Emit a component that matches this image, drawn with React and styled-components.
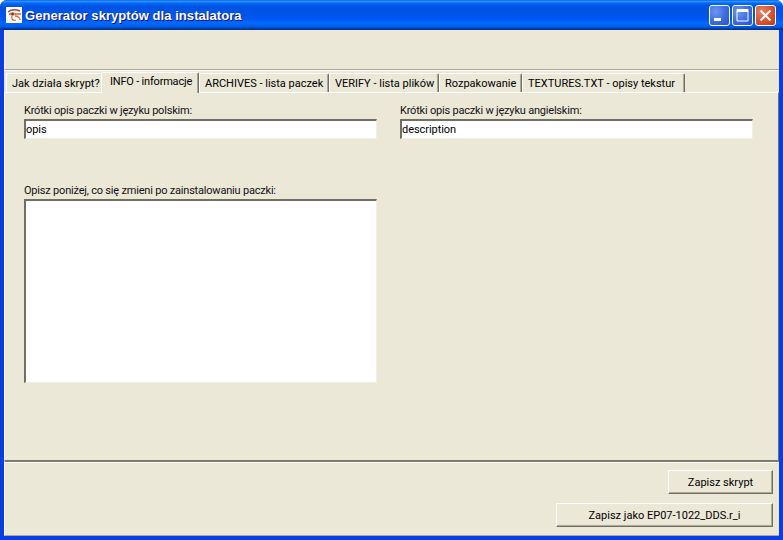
import React from 'react';
import styled, { createGlobalStyle } from 'styled-components';

const Global = createGlobalStyle`
  html, body { margin: 0; padding: 0; background: #fff; }
  body { font-family: Roboto, "Liberation Sans", Arial, sans-serif; }
  * { box-sizing: border-box; }
`;

const Win = styled.div`
  width: 783px; height: 540px; display: flex; flex-direction: column;
  border-radius: 7px 7px 0 0; overflow: hidden; background: #0b3de6;
`;
const TitleBar = styled.div`
  height: 30px; flex: none; display: flex; align-items: center; padding: 0 7px 0 6px;
  background: linear-gradient(180deg, #0058ee 0%, #3593ff 4%, #288eff 6%, #127dff 8%, #036ffc 10%, #0262ee 14%, #0057e5 20%, #0054e3 24%, #0055eb 56%, #005bf5 66%, #026afe 76%, #0062ef 86%, #0052d6 92%, #0040ab 94%, #003092 100%);
`;
const AppIcon = styled.svg`width: 16px; height: 16px; flex: none; display: block;`;
const TitleText = styled.div`
  margin-left: 3px; flex: 1; color: #fff; font: bold 13px "Liberation Sans", Arial, sans-serif;
  letter-spacing: 0.06px; text-shadow: 1px 1px 0 #0f1089; white-space: nowrap;
`;
const Controls = styled.div`display: flex; gap: 2px;`;
const Ctrl = styled.div`
  width: 21px; height: 21px; border: 1px solid #fff; border-radius: 3px;
  display: flex; align-items: center; justify-content: center;
  background: ${p => p.$red
    ? 'radial-gradient(circle at 30% 30%, #e8856a 0%, #d8502c 55%, #c23a14 100%)'
    : 'radial-gradient(circle at 30% 30%, #6f96ee 0%, #3a6be2 55%, #2a50d0 100%)'};
`;
const CtrlGlyph = styled.svg`width: 19px; height: 19px; display: block;`;

const Client = styled.div`
  flex: 1; margin: 0 4px 4px; background: #ebe8d8; display: flex; flex-direction: column; min-height: 0;
`;
const TopBand = styled.div`
  height: 40px; flex: none; border-bottom: 1px solid #aca899; border-left: 1px solid #f8f6ee;
  box-shadow: 0 1px 0 #fff;
`;
const TabStrip = styled.div`
  height: 22px; flex: none; display: flex; align-items: flex-end; padding-left: 2px; position: relative; z-index: 1;
`;
const Tab = styled.div`
  position: relative; z-index: ${p => (p.$active ? 1 : 0)};
  height: ${p => (p.$active ? 21 : 19)}px; width: ${p => p.$w}px; flex: none;
  margin-bottom: ${p => (p.$active ? -1 : 0)}px;
  margin-left: ${p => (p.$active ? -2 : 0)}px;
  padding: ${p => (p.$active ? 2 : 3)}px 0 0 ${p => (p.$active ? 8 : 5)}px;
  letter-spacing: ${p => (p.$active ? -0.2 : 0)}px;
  background: #ebe8d8; font-size: 11px; line-height: 14px; color: #000; white-space: nowrap;
  border-top: 1px solid #fff; border-left: 1px solid #fff; border-right: 1px solid #716f64;
  box-shadow: inset -1px 0 0 #aca899;
  border-radius: 2px 2px 0 0;
`;
const Panel = styled.div`
  flex: 1; min-height: 0; border-top: 1px solid #fff; border-left: 1px solid #fff; border-right: 1px solid #716f64;
  padding: 11px 25px 0 19px;
  display: grid; grid-template-columns: 353px 353px; column-gap: 23px; align-content: start;
`;
const Field = styled.label`display: block; font-size: 11px; line-height: 14px; color: #111; letter-spacing: -0.2px;`;
const FieldSpacer = styled.div`grid-column: 1 / -1; height: 45px;`;
const Input = styled.div`
  margin-top: 1px; height: 20px; background: #fff; color: #000; font-size: 11px; line-height: 16px; padding: 1px 0 0 0;
  letter-spacing: -0.05px;
  border-top: 2px solid #716f64; border-left: 2px solid #716f64;
  border-bottom: 1px solid #f1efe2; border-right: 1px solid #f1efe2;
`;
const TextArea = styled(Input)`height: 184px;`;

const Footer = styled.div`
  height: 76px; flex: none; border-top: 2px solid #7d7b6c; border-left: 1px solid #fff; border-bottom: 1px solid #aca899;
  box-shadow: inset 0 1px 0 #fff;
  display: flex; flex-direction: column; align-items: flex-end; gap: 9px; padding: 8px 6px 0 0;
`;
const Btn = styled.div`
  width: ${p => p.$w}px; height: 24px; background: #ebe8d8; font-size: 11px; color: #000;
  display: flex; align-items: center; justify-content: center;
  border-top: 1px solid #fff; border-left: 1px solid #fff;
  border-right: 1px solid #716f64; border-bottom: 1px solid #716f64;
  box-shadow: inset -1px -1px 0 #aca899;
`;

const tabs = [
  ['Jak działa skrypt?', 97],
  ['INFO - informacje', 98, true],
  ['ARCHIVES - lista paczek', 130],
  ['VERIFY - lista plików', 110],
  ['Rozpakowanie', 83],
  ['TEXTURES.TXT - opisy tekstur', 163],
];

export default function App() {
  return (
    <Win>
      <Global />
      <TitleBar>
        <AppIcon viewBox="0 0 16 16">
          <rect width="16" height="16" fill="#fff" />
          <path d="M2 5 C5 2.5 10 2.5 14 4" stroke="#9a4a30" strokeWidth="1.4" fill="none" />
          <path d="M3 7 C5 5.5 8 5.5 10 7 C8 8.5 5 8.5 3 7Z" fill="#e8a080" stroke="#c0502a" strokeWidth="0.8" />
          <circle cx="6.5" cy="7" r="1.3" fill="#7a3018" />
          <path d="M10 7 L15 7 M6 9 C5 12 7 14 10 13 M9 9 C12 9 14 11 14 13" stroke="#e8602c" strokeWidth="1.3" fill="none" />
        </AppIcon>
        <TitleText>Generator skryptów dla instalatora</TitleText>
        <Controls>
          <Ctrl><CtrlGlyph viewBox="0 0 19 19"><rect x="4" y="12" width="7" height="3" fill="#fff" /></CtrlGlyph></Ctrl>
          <Ctrl><CtrlGlyph viewBox="0 0 19 19"><path d="M4 3.5H15V15H4Z" fill="none" stroke="#fff" strokeWidth="1" /><rect x="4" y="3" width="11" height="3" fill="#fff" /></CtrlGlyph></Ctrl>
          <Ctrl $red><CtrlGlyph viewBox="0 0 19 19"><path d="M4.5 4.5L14.5 14.5M14.5 4.5L4.5 14.5" stroke="#fff" strokeWidth="2" /></CtrlGlyph></Ctrl>
        </Controls>
      </TitleBar>
      <Client>
        <TopBand />
        <TabStrip>
          {tabs.map(([t, w, a]) => <Tab key={t} $w={w} $active={a}>{t}</Tab>)}
        </TabStrip>
        <Panel>
          <Field>Krótki opis paczki w języku polskim:<Input>opis</Input></Field>
          <Field>Krótki opis paczki w języku angielskim:<Input>description</Input></Field>
          <FieldSpacer />
          <Field>Opisz poniżej, co się zmieni po zainstalowaniu paczki:<TextArea /></Field>
        </Panel>
        <Footer>
          <Btn $w={105}>Zapisz skrypt</Btn>
          <Btn $w={217}>Zapisz jako EP07-1022_DDS.r_i</Btn>
        </Footer>
      </Client>
    </Win>
  );
}
